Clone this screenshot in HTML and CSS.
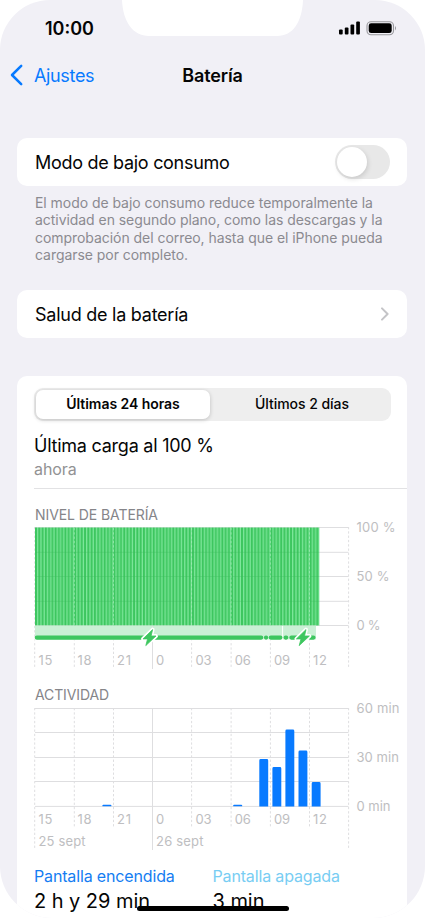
FILE: index.html
```html
<!DOCTYPE html>
<html lang="es">
<head>
<meta charset="utf-8">
<title>Batería</title>
<link rel="stylesheet" href="styles.css">
</head>
<body>
<main class="phone">
  <svg class="notch" width="182" height="36" viewBox="0 0 182 36"><path d="M0 0C1 22 11 36 27 36H155C171 36 180 22 181 0Z" fill="#fff"/></svg>
  <header class="status">
    <span class="time">10:00</span>
    <svg class="indicators" width="60" height="16" viewBox="0 0 60 16">
      <rect x="1" y="9.6" width="3.7" height="5" rx="1"/><rect x="6.8" y="7.4" width="3.7" height="7.2" rx="1"/><rect x="12.5" y="4.6" width="3.7" height="10" rx="1"/><rect x="18.2" y="1.4" width="3.7" height="13.2" rx="1"/>
      <rect x="29" y="1.7" width="26.5" height="13" rx="4" fill="none" stroke="#98989c" stroke-width="1.1"/><rect x="30.7" y="3.3" width="23" height="9.8" rx="2.4"/><path d="M57 6Q59 8.2 57 10.5Z" fill="#98989c"/>
    </svg>
  </header>
  <nav class="nav">
    <a class="back"><svg width="14" height="22" viewBox="0 0 14 22"><path d="M11.2 1.8 2 11l9.2 9.2" fill="none" stroke="#087aff" stroke-width="2.5" stroke-linecap="round" stroke-linejoin="round"/></svg><span>Ajustes</span></a>
    <h1>Batería</h1>
  </nav>
  <section class="card row"><span class="low">Modo de bajo consumo</span><span class="switch"><i></i></span></section>
  <p class="note"><span>El modo de bajo consumo reduce temporalmente la</span><span>actividad en segundo plano, como las descargas y la</span><span>comprobación del correo, hasta que el iPhone pueda</span><span>cargarse por completo.</span></p>
  <section class="card row health"><span class="label-health">Salud de la batería</span><svg width="10" height="14" viewBox="0 0 10 14"><path d="m2 1.4 5.6 5.6-5.6 5.6" fill="none" stroke="#c4c4c7" stroke-width="2" stroke-linecap="round" stroke-linejoin="round"/></svg></section>
  <section class="card usage">
    <div class="tabs"><span class="active">Últimas 24 horas</span><span>Últimos 2 días</span></div>
    <div class="charge"><h2>Última carga al 100 %</h2><p>ahora</p></div>
    <h3 class="level-title">NIVEL DE BATERÍA</h3>
    <svg class="chart level" width="373" height="156" viewBox="34 517 373 156">
      <defs>
        <pattern id="bars" x="35" y="527" width="9.81" height="98" patternUnits="userSpaceOnUse">
          <rect width="9.81" height="98" fill="#80e89d"/><rect width="2" height="98" fill="#3dc65f"/><rect x="3.27" width="2" height="98" fill="#3dc65f"/><rect x="6.54" width="2" height="98" fill="#3dc65f"/>
        </pattern>
        <path id="bolt" d="M9.6 0 0 9.3h4.6L2.8 16 13 6.4H8.1Z"/>
      </defs>
      <path class="grid" d="M35 527.5H348.5M35 552.3H348.5M35 576.5H348.5M35 601.3H348.5M35 625.5H348.5"/>
      <path class="dash" d="M34.7 527V667M74.3 527V667M113.5 527V667M191.6 527V667M231.1 527V667M270.4 527V667M309.5 527V667M348.6 527V667"/>
      <rect x="35" y="527.5" width="284.3" height="98" fill="url(#bars)"/>
      <path d="M35 552.3H319M35 576.5H319M35 601.3H319" stroke="#37b95a" stroke-opacity=".3"/>
      <path class="dash over" d="M74.3 528V625M113.5 528V625M191.6 528V625M231.1 528V625M270.4 528V625M309.5 528V625"/>
      <rect x="35" y="625.7" width="281" height="14" fill="#caf0d5"/>
      <path class="grid" d="M152.5 626V669"/>
      <path d="M282.6 626v14" stroke="#fff"/>
      <rect x="34" y="639.6" width="284" height="1" fill="#fff"/>
      <path d="M36.8 637.6H261.2M266 637.6H266.1M270.8 637.6H280.4M285.6 637.6H286.2M291.4 637.6H297M310 637.6H313.5" stroke="#3dc65f" stroke-width="4.2" stroke-linecap="round"/>
      <use href="#bolt" x="143" y="629.6" class="bolt-edge"/><use href="#bolt" x="296.4" y="629.6" class="bolt-edge"/>
      <use href="#bolt" x="143" y="629.6" class="bolt"/><use href="#bolt" x="296.4" y="629.6" class="bolt"/>
      <g class="axis"><text x="38.5" y="665" textLength="14">15</text><text x="77.5" y="665" textLength="14">18</text><text x="117" y="665" textLength="14">21</text><text x="156" y="665">0</text><text x="195.5" y="665" textLength="16">03</text><text x="234.7" y="665" textLength="16">06</text><text x="274" y="665" textLength="16">09</text><text x="313" y="665" textLength="14">12</text>
      <text x="356.5" y="532" textLength="39">100 %</text><text x="356.5" y="581" textLength="33">50 %</text><text x="356.5" y="630" textLength="24">0 %</text></g>
    </svg>
    <h3 class="activity-title">ACTIVIDAD</h3>
    <svg class="chart activity" width="373" height="159" viewBox="34 696 373 159">
      <path class="grid" d="M35 708.5H348.5M35 732.5H348.5M35 757.5H348.5M35 781.5H348.5M35 806.4H348.5M152.5 708V850"/>
      <path class="dash" d="M34.7 708V849M74.3 708V827M113.5 708V827M191.6 708V827M231.1 708V827M270.4 708V827M309.5 708V827M348.6 708V849"/>
      <g fill="#087aff"><path d="M102.4 806.2v-.6q0-.9.9-.9h7.2q.9 0 .9.9v.6zM233.2 806.2v-.6q0-.9.9-.9h7.2q.9 0 .9.9v.6z"/>
      <path d="M259.3 806.4v-46q0-1.4 1.4-1.4h6.1q1.4 0 1.4 1.4v46zM272.4 806.4v-38q0-1.4 1.4-1.4h6.1q1.4 0 1.4 1.4v38zM285.4 806.4v-75.4q0-1.4 1.4-1.4h6.1q1.4 0 1.4 1.4v75.4zM298.5 806.4v-54.4q0-1.4 1.4-1.4h6.1q1.4 0 1.4 1.4v54.4zM311.7 806.4v-23q0-1.4 1.4-1.4h6.1q1.4 0 1.4 1.4v23z"/></g>
      <g class="axis"><text x="38.5" y="824" textLength="14">15</text><text x="77.5" y="824" textLength="14">18</text><text x="117" y="824" textLength="14">21</text><text x="156" y="824">0</text><text x="195.5" y="824" textLength="16">03</text><text x="234.7" y="824" textLength="16">06</text><text x="274" y="824" textLength="16">09</text><text x="313" y="824" textLength="14">12</text>
      <text x="38.5" y="846" textLength="47">25 sept</text><text x="156" y="846" textLength="47.5">26 sept</text>
      <text x="356.5" y="713" textLength="43">60 min</text><text x="356.5" y="762" textLength="42.5">30 min</text><text x="356.5" y="811" textLength="34">0 min</text></g>
    </svg>
    <div class="screen"><div><h4>Pantalla encendida</h4><p>2 h y 29 min</p></div><div class="off"><h4>Pantalla apagada</h4><p>3 min</p></div></div>
  </section>
  <div class="home"></div>
</main>
</body>
</html>
```
FILE: styles.css
```css
* { box-sizing: border-box; }
body { margin: 0; background: #fff; font-family: Inter, "Liberation Sans", sans-serif; color: #050505; }
h1, h2, h3, h4, p { margin: 0; font-weight: 400; }
svg { display: block; flex: none; }
.phone { position: relative; width: 425px; height: 918px; background: #f1f0f6; border-radius: 50px 50px 52px 52px; overflow: hidden; white-space: nowrap; }
.notch { position: absolute; left: 122px; top: 0; }
.status { display: flex; justify-content: space-between; height: 56px; padding: 17px 27px 0 45px; }
.time { font-size: 18px; line-height: 24px; font-weight: 600; letter-spacing: 0; }
.indicators { margin-top: 3px; }
.nav { display: grid; grid-template-columns: 1fr auto 1fr; align-items: center; height: 38px; padding: 0 10px; margin-bottom: 43.5px; }
.back { display: flex; align-items: center; gap: 10px; color: #087aff; font-size: 18px; letter-spacing: -.35px; }
h1 { font-size: 18px; font-weight: 600; letter-spacing: -.1px; }
.card { margin: 0 18px 0 17px; background: #fff; border-radius: 10px; }
.row { display: flex; align-items: center; justify-content: space-between; height: 48px; padding: 0 17px 0 18px; font-size: 18px; }
.low { letter-spacing: -.3px; padding-top: 1px; }
.label-health { letter-spacing: -.25px; }
.switch { width: 55px; height: 34px; padding: 2px; border-radius: 17px; background: #e8e8e8; }
.switch i { display: block; width: 30px; height: 30px; border-radius: 50%; background: #fff; box-shadow: 1px 2px 5px #0002; }
.note { display: flex; flex-direction: column; align-items: flex-start; padding: 8.5px 35px 0; height: 104.2px; font-size: 14px; line-height: 17.4px; letter-spacing: -.05px; color: #8b8a90; }
.health { padding-top: 1px; }
.usage { height: 560px; margin-top: 38.3px; padding: 12px 0 0 17px; border-radius: 10px 10px 0 0; }
.tabs { display: grid; grid-template-columns: 174px 1fr; width: 357px; height: 33px; padding: 2px; border-radius: 9px; background: #eee; font-size: 14px; line-height: 28px; letter-spacing: -.05px; text-align: center; font-weight: 500; }
.tabs span:last-child { padding-left: 5px; }
.tabs .active { background: #fff; border-radius: 7px; box-shadow: 0 1px 4px #0003; font-weight: 600; }
.charge { height: 68px; padding-top: 13px; border-bottom: 1px solid #e2e2e4; }
h2 { font-size: 18px; line-height: 24px; letter-spacing: -.24px; }
.charge p { font-size: 16px; line-height: 22px; letter-spacing: -.1px; color: #929293; }
h3 { font-size: 14px; line-height: 18px; color: #858589; padding-left: 1px; }
.level-title { margin-top: 17px; letter-spacing: -.08px; }
.activity-title { margin-top: 13px; letter-spacing: -.12px; }
.level { margin-top: -7px; }
.activity { margin-top: -8px; }
.grid { stroke: #dedee0; fill: none; }
.dash { stroke: #dedee0; stroke-dasharray: 2.3 2; fill: none; }
.over { stroke: #a9ecbb; stroke-opacity: .65; }
.bolt-edge { fill: #fff; stroke: #fff; stroke-width: 4; stroke-linejoin: round; }
.bolt { fill: #3dc65f; stroke: #3dc65f; stroke-width: .8; stroke-linejoin: round; }
.axis { font-size: 13px; fill: #bebec1; }
.screen { display: grid; grid-template-columns: 178.5px 1fr; padding-top: 10px; }
h4 { font-size: 16px; line-height: 22px; letter-spacing: -.15px; color: #147df2; }
.screen p { font-size: 20px; line-height: 28px; letter-spacing: -.05px; }
.off h4 { color: #78cdf3; }
.home { position: absolute; left: 137px; top: 906px; width: 152px; height: 5px; border-radius: 3px; background: #000; }
```
